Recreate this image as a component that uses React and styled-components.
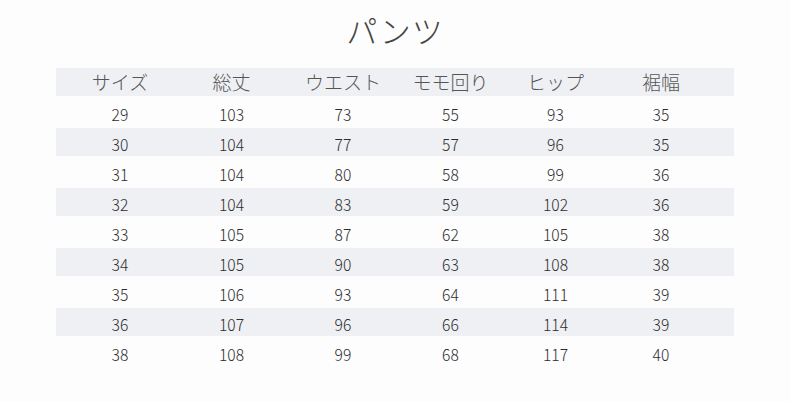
import React from "react";
import styled, { createGlobalStyle } from "styled-components";

const GlobalStyle = createGlobalStyle`
  html, body {
    margin: 0;
    padding: 0;
    background: #fdfdfd;
  }
  body {
    font-family: "Noto Sans CJK JP", "Noto Sans", sans-serif;
  }
`;

const Page = styled.div`
  width: 790px;
  height: 402px;
  display: flex;
  flex-direction: column;
  align-items: center;
  overflow: hidden;
`;

const Title = styled.h1`
  margin: 0;
  height: 68px;
  display: flex;
  align-items: center;
  justify-content: center;
  padding: 0 0 10px 0;
  box-sizing: border-box;
  font-size: 31px;
  font-weight: 300;
  letter-spacing: 1px;
  color: #444;
`;

const Table = styled.div`
  width: 678px;
  display: flex;
  flex-direction: column;
`;

const Row = styled.div`
  display: grid;
  grid-template-columns: 110px 113px 110px 105px 105px 106px;
  padding: 0 20px 0 9px;
  height: ${(p) => (p.$shaded ? 28 : 32)}px;
  align-items: center;
  background: ${(p) => (p.$shaded ? "#eff0f4" : "transparent")};
`;

const HeadCell = styled.div`
  text-align: center;
  font-size: 19px;
  font-weight: 300;
  color: #555;
  line-height: 1;
  padding-bottom: 1px;
`;

const Cell = styled.div`
  text-align: center;
  font-size: 17px;
  font-weight: 300;
  color: #2e2e2e;
  line-height: 1;
  padding-top: 2px;
  transform: scaleX(0.92);
`;

const headers = ["サイズ", "総丈", "ウエスト", "モモ回り", "ヒップ", "裾幅"];

const rows = [
  [29, 103, 73, 55, 93, 35],
  [30, 104, 77, 57, 96, 35],
  [31, 104, 80, 58, 99, 36],
  [32, 104, 83, 59, 102, 36],
  [33, 105, 87, 62, 105, 38],
  [34, 105, 90, 63, 108, 38],
  [35, 106, 93, 64, 111, 39],
  [36, 107, 96, 66, 114, 39],
  [38, 108, 99, 68, 117, 40],
];

const App = () => {
  return (
    <Page>
      <GlobalStyle />
      <Title>パンツ</Title>
      <Table>
        <Row $shaded>
          {headers.map((h) => (
            <HeadCell key={h}>{h}</HeadCell>
          ))}
        </Row>
        {rows.map((r, i) => (
          <Row key={r[0]} $shaded={i % 2 === 1}>
            {r.map((v, j) => (
              <Cell key={j}>{v}</Cell>
            ))}
          </Row>
        ))}
      </Table>
    </Page>
  );
};

export default App;
